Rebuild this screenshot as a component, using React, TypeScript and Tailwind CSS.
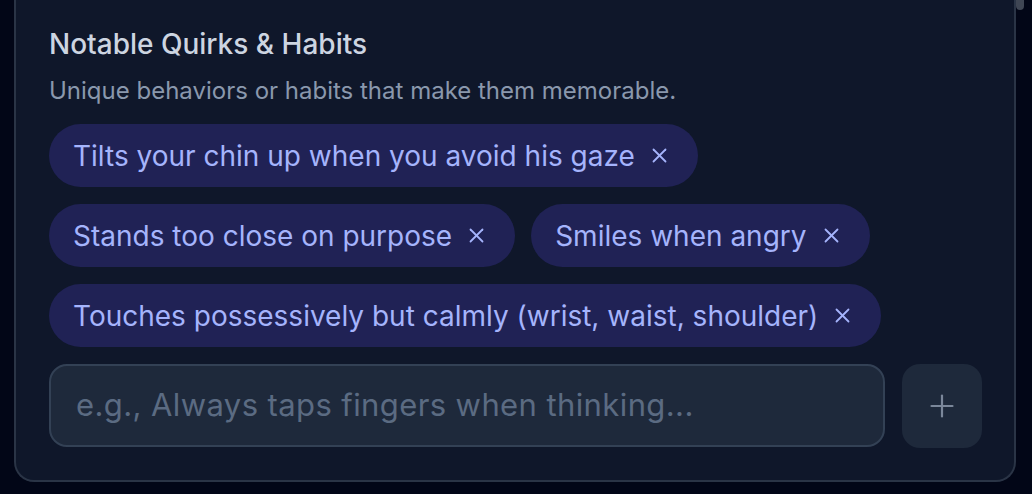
import React from "react";

const quirks = [
  "Tilts your chin up when you avoid his gaze",
  "Stands too close on purpose",
  "Smiles when angry",
  "Touches possessively but calmly (wrist, waist, shoulder)",
];

function XIcon() {
  return (
    <svg width="15" height="15" viewBox="0 0 15 15" fill="none" stroke="currentColor" strokeWidth="1.8" strokeLinecap="round">
      <path d="M1.5 1.5 L13.5 13.5" />
      <path d="M13.5 1.5 L1.5 13.5" />
    </svg>
  );
}

export default function App() {
  return (
    <div
      className="relative w-[1032px] h-[494px] overflow-hidden bg-[#020617] pl-[14px] pr-[16px]"
      style={{ fontFamily: "Inter, 'Noto Sans', sans-serif" }}
    >
      <div className="absolute right-[8px] top-[-6px] w-[8px] h-[16px] rounded-full bg-[#3f4654]" />
      <div className="w-[1002px] rounded-b-[20px] border-x-2 border-b-2 border-[#2a3446] bg-[#0f172a] pl-[33px] pr-[32px] pt-[24px] pb-[32px]">
        <div className="text-[28px] leading-[40px] font-medium text-[#cdd5e1]">Notable Quirks &amp; Habits</div>
        <div className="mt-[11px] text-[24px] leading-[32px] text-[#8a98ad]">
          Unique behaviors or habits that make them memorable.
        </div>
        <div className="mt-[17px] flex flex-wrap gap-x-[16px] gap-y-[17px]">
          {quirks.map((q) => (
            <div
              key={q}
              className="flex h-[63px] items-center rounded-full bg-[#202255] pl-[24px] pr-[31px] text-[28px] text-[#a5b4fc]"
            >
              <span>{q}</span>
              <span className="ml-[17px] flex items-center">
                <XIcon />
              </span>
            </div>
          ))}
        </div>
        <div className="mt-[17px] flex gap-[17px]">
          <div className="flex h-[83px] flex-1 items-center rounded-[18px] border-2 border-[#334155] bg-[#1e293b] pl-[25px] text-[31px] tracking-[0.4px] text-[#5b6b82]">
            e.g., Always taps fingers when thinking...
          </div>
          <div className="flex h-[84px] w-[80px] items-center justify-center rounded-[18px] bg-[#1e293b] text-[#7b879a]">
            <svg width="24" height="24" viewBox="0 0 24 24" fill="none" stroke="currentColor" strokeWidth="2.2" strokeLinecap="round">
              <path d="M12 1.5 V22.5" />
              <path d="M1.5 12 H22.5" />
            </svg>
          </div>
        </div>
      </div>
    </div>
  );
}
